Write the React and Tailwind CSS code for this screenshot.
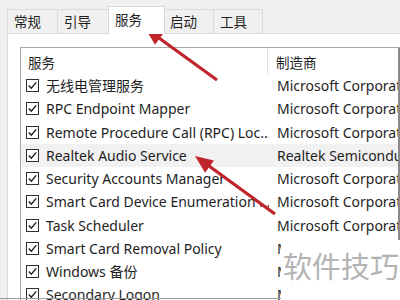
import React from "react";

const rows = [
  ["无线电管理服务", "Microsoft Corporation"],
  ["RPC Endpoint Mapper", "Microsoft Corporation"],
  ["Remote Procedure Call (RPC) Loc...", "Microsoft Corporation"],
  ["Realtek Audio Service", "Realtek Semiconductor"],
  ["Security Accounts Manager", "Microsoft Corporation"],
  ["Smart Card Device Enumeration ...", "Microsoft Corporation"],
  ["Task Scheduler", "Microsoft Corporation"],
  ["Smart Card Removal Policy", "Microsoft Corporation"],
  ["Windows 备份", "Microsoft Corporation"],
  ["Secondary Logon", "Microsoft Corporation"],
];

function Check() {
  return (
    <svg width="13" height="13" viewBox="0 0 13 13" className="shrink-0">
      <rect x="0.5" y="0.5" width="12" height="12" fill="#fff" stroke="#2e2e2e" />
      <path d="M2.8 6.6 L5.3 9.2 L10.2 3.4" fill="none" stroke="#1e1e1e" strokeWidth="1.4" />
    </svg>
  );
}

const tabs = [
  ["常规", "w-[51px]"],
  ["引导", "w-[52px]"],
  ["服务", "w-[57px]"],
  ["启动", "w-[51px]"],
  ["工具", "w-[50px]"],
];

export default function App() {
  return (
    <div className="relative w-[400px] h-[300px] overflow-hidden bg-[#f0f0f0] text-[#1e1e1e] font-['Noto_Sans','Noto_Sans_CJK_SC',sans-serif]">
      {/* tab bar */}
      <div className="h-[33px] flex items-end pl-[7px]">
        {tabs.map(([t, w], i) =>
          i === 2 ? (
            <div
              key={t}
              className={`${w} h-[28px] -mx-[1px] mb-[-1px] relative z-10 bg-white border border-b-0 border-[#d9d9d9] pl-[6px] pt-[2px] text-[13.5px] leading-[20px] font-['Noto_Sans_CJK_SC',sans-serif]`}
            >
              {t}
            </div>
          ) : (
            <div
              key={t}
              className={`${w} h-[24px] border border-b-0 border-[#dadada] -ml-[1px] first:ml-0 pl-[6px] pt-[1px] text-[13.5px] leading-[20px] font-['Noto_Sans_CJK_SC',sans-serif]`}
            >
              {t}
            </div>
          )
        )}
      </div>
      {/* panel */}
      <div className="ml-[7px] h-[267px] bg-white border-l border-t border-[#d9d9d9] pl-[12px] pt-[13px]">
        <div className="h-full border-l border-t border-[#a8a8a8] border-r-2 border-r-[#8a8a8a] overflow-hidden">
          <div className="h-[26px] flex text-[13.5px] font-['Noto_Sans_CJK_SC',sans-serif]">
            <div className="w-[247px] border-r border-[#e3e3e3] pl-[7px] pt-[5px] leading-[18px]">服务</div>
            <div className="flex-1 pl-[8px] pt-[5px] leading-[18px]">制造商</div>
          </div>
          {rows.map(([a, b], i) => (
            <div
              key={a}
              className={`h-[23.25px] flex items-center text-[14px] whitespace-nowrap ${i === 3 ? "bg-[#f1f1f1]" : ""}`}
            >
              <div className="w-[248px] flex items-center gap-[7px] pl-[5px] overflow-hidden">
                <Check />
                <span>{a}</span>
              </div>
              <div className="flex-1 pl-[8px] overflow-hidden">{b}</div>
            </div>
          ))}
        </div>
      </div>
      {/* bottom line */}
      <div className="absolute left-0 right-0 top-[298px] h-[1px] bg-[#9a9a9a]" />
      {/* watermark */}
      <div className="absolute left-[281px] top-[240px] right-0 bottom-0 bg-white pl-[2px] pt-[8px] text-[29px] leading-[34px] text-[#b3b3b3] font-['Noto_Sans_CJK_SC',sans-serif]">
        软件技巧
      </div>
      {/* arrows */}
      <svg className="absolute inset-0 pointer-events-none" width="400" height="300">
        <g fill="#bf252b" stroke="#bf252b">
          <line x1="217" y1="80" x2="159" y2="38" strokeWidth="3.2" />
          <polygon points="145,28 163.9,32.7 155,44.75" stroke="none" />
          <line x1="275" y1="214" x2="209" y2="166" strokeWidth="3.2" />
          <polygon points="195,156 213.9,160.6 205.1,172.7" stroke="none" />
        </g>
      </svg>
    </div>
  );
}
